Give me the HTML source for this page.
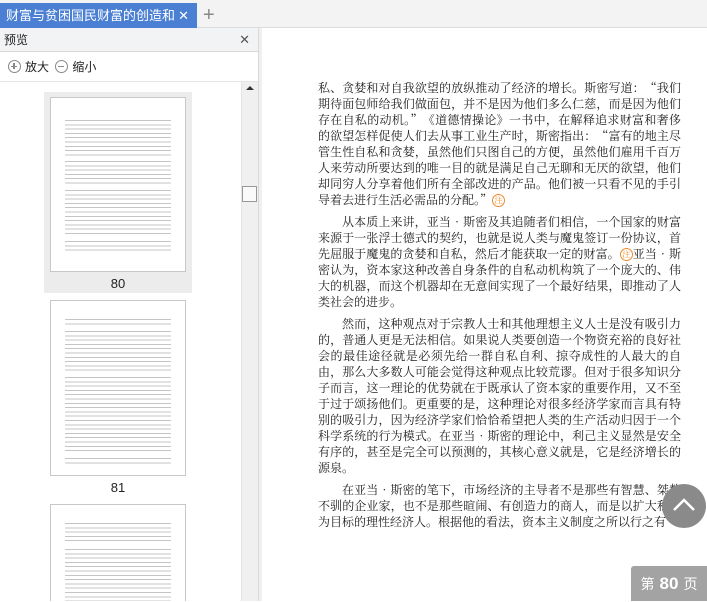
<!DOCTYPE html>
<html><head><meta charset="utf-8"><style>
*{margin:0;padding:0;box-sizing:border-box}
body{width:707px;height:601px;overflow:hidden;background:#fff;font-family:"Liberation Sans","Noto Sans CJK SC",sans-serif;position:relative}
.tabbar{position:absolute;left:0;top:0;width:707px;height:28px;background:#f3f3f3;border-bottom:1px solid #dcdcdc}
.tab{position:absolute;left:0;top:3px;width:197px;height:25px;background:#4a7fd4;color:#fff;font-size:13px;line-height:25px;padding-left:6px;white-space:nowrap;overflow:hidden}
.tab .x{position:absolute;right:0;top:0;font-size:13px;background:#4a7fd4;padding:0 8px 0 4px}
.plus{position:absolute;left:203px;top:3px;font-size:20px;color:#888;line-height:24px}
.left{position:absolute;left:0;top:28px;width:258px;height:573px;background:#fff}
.hdr{height:24px;background:#f2f3f5;border-bottom:1px solid #d8d8d8;font-size:12px;line-height:24px;padding-left:4px;color:#222;position:relative}
.hdr .x{position:absolute;right:8px;top:0;color:#555;font-size:13px}
.tools{height:30px;border-bottom:1px solid #e6e6e6;font-size:12px;line-height:30px;padding-left:8px;color:#222}
.ic{display:inline-block;width:13px;height:13px;border:1.3px solid #888;border-radius:50%;position:relative;vertical-align:-2px;margin-right:4px}
.ic:before{content:"";position:absolute;left:2px;top:4.5px;width:6px;height:1.3px;background:#888}
.ic.p:after{content:"";position:absolute;left:4.4px;top:2px;width:1.3px;height:6px;background:#888}
.list{position:absolute;left:0;top:82px;width:241px;height:519px;overflow:hidden}
.sb{position:absolute;left:241px;top:82px;width:17px;height:519px;background:#f0f0f0;border-left:1px solid #e4e4e4}
.thumb{position:absolute;left:50px;width:136px;background:#fff;border:1px solid #c8c8c8}
.txt{position:absolute;left:14px;right:14px;background:repeating-linear-gradient(#fff 0,#fff 2px,#c4c4c4 2px,#c4c4c4 3px,#fff 3px,#fff 4.3px)}
.num{position:absolute;left:44px;width:148px;text-align:center;font-size:13px;color:#222}
.divider{position:absolute;left:258px;top:28px;width:4px;height:573px;background:#f0f0f0;border-left:1px solid #d8d8d8}
.main{position:absolute;left:318px;top:80px;width:363px;font-family:"Noto Serif CJK SC","Liberation Serif",serif;font-size:12px;line-height:16px;color:#222;text-align:justify}
.main p{text-indent:2em;margin-bottom:6px}
.n{display:inline-block;width:13px;height:13px;border:1px solid #f08a2c;border-radius:50%;color:#f08a2c;font-size:8px;line-height:11px;text-align:center;text-indent:0;vertical-align:1px}
.up{position:absolute;left:662px;top:484px;width:44px;height:44px;border-radius:50%;background:#8a8a8a}
.pg{position:absolute;left:631px;top:566px;width:76px;height:35px;background:#a3a3a3;border-radius:3px 0 0 0;color:#fff;font-size:14px;line-height:36px;text-align:center}
.pg b{font-size:17px;margin:0 5px}
</style></head><body>
<div class="tabbar"><div class="tab">财富与贫困国民财富的创造和企业<span class="x">✕</span></div><div class="plus">+</div></div>
<div class="left">
<div class="hdr">预览<span class="x">✕</span></div>
<div class="tools"><span class="ic p"></span>放大 <span class="ic" style="margin-left:3px"></span>缩小</div>
</div>
<div class="list">
<div style="position:absolute;left:44px;top:10px;width:148px;height:201px;background:#ececec"></div>
<div class="thumb" style="top:15px;height:175px">
<div class="txt" style="top:20px;height:38px"></div>
<div class="txt" style="top:61px;height:26px"></div>
<div class="txt" style="top:90px;height:48px"></div>
<div class="txt" style="top:141px;height:13px"></div>
</div>
<div class="num" style="top:194px">80</div>
<div class="thumb" style="top:218px;height:176px">
<div class="txt" style="top:16px;height:9px"></div>
<div class="txt" style="top:28px;height:43px"></div>
<div class="txt" style="top:74px;height:78px"></div>
<div class="txt" style="top:155px;height:9px"></div>
</div>
<div class="num" style="top:398px">81</div>
<div class="thumb" style="top:422px;height:120px">
<div class="txt" style="top:16px;height:22px"></div>
<div class="txt" style="top:42px;height:80px"></div>
</div>
</div>
<div class="sb"><div style="position:absolute;left:4px;top:4px;width:0;height:0;border-left:4px solid transparent;border-right:4px solid transparent;border-bottom:4px solid #333"></div><div style="position:absolute;left:0;top:104px;width:15px;height:16px;background:#fafafa;border:1px solid #999"></div></div>
<div class="divider"></div>
<div class="main">
<p style="text-indent:0">私、贪婪和对自我欲望的放纵推动了经济的增长。斯密写道：“我们期待面包师给我们做面包，并不是因为他们多么仁慈，而是因为他们存在自私的动机。”《道德情操论》一书中，在解释追求财富和奢侈的欲望怎样促使人们去从事工业生产时，斯密指出：“富有的地主尽管生性自私和贪婪，虽然他们只图自己的方便，虽然他们雇用千百万人来劳动所要达到的唯一目的就是满足自己无聊和无厌的欲望，他们却同穷人分享着他们所有全部改进的产品。他们被一只看不见的手引导着去进行生活必需品的分配。”<span class="n">注</span></p>
<p>从本质上来讲，亚当•斯密及其追随者们相信，一个国家的财富来源于一张浮士德式的契约，也就是说人类与魔鬼签订一份协议，首先屈服于魔鬼的贪婪和自私，然后才能获取一定的财富。<span class="n">注</span>亚当•斯密认为，资本家这种改善自身条件的自私动机构筑了一个庞大的、伟大的机器，而这个机器却在无意间实现了一个最好结果，即推动了人类社会的进步。</p>
<p>然而，这种观点对于宗教人士和其他理想主义人士是没有吸引力的，普通人更是无法相信。如果说人类要创造一个物资充裕的良好社会的最佳途径就是必须先给一群自私自利、掠夺成性的人最大的自由，那么大多数人可能会觉得这种观点比较荒谬。但对于很多知识分子而言，这一理论的优势就在于既承认了资本家的重要作用，又不至于过于颂扬他们。更重要的是，这种理论对很多经济学家而言具有特别的吸引力，因为经济学家们恰恰希望把人类的生产活动归因于一个科学系统的行为模式。在亚当•斯密的理论中，利己主义显然是安全有序的，甚至是完全可以预测的，其核心意义就是，它是经济增长的源泉。</p>
<p>在亚当•斯密的笔下，市场经济的主导者不是那些有智慧、桀骜不驯的企业家，也不是那些暄闹、有创造力的商人，而是以扩大私利为目标的理性经济人。根据他的看法，资本主义制度之所以行之有</p>
</div>
<div class="up"><svg width="44" height="44"><path d="M12 26 L22 16 L32 26" stroke="#fff" stroke-width="2.5" fill="none"/></svg></div>
<div class="pg">第<b>80</b>页</div>
</body></html>
